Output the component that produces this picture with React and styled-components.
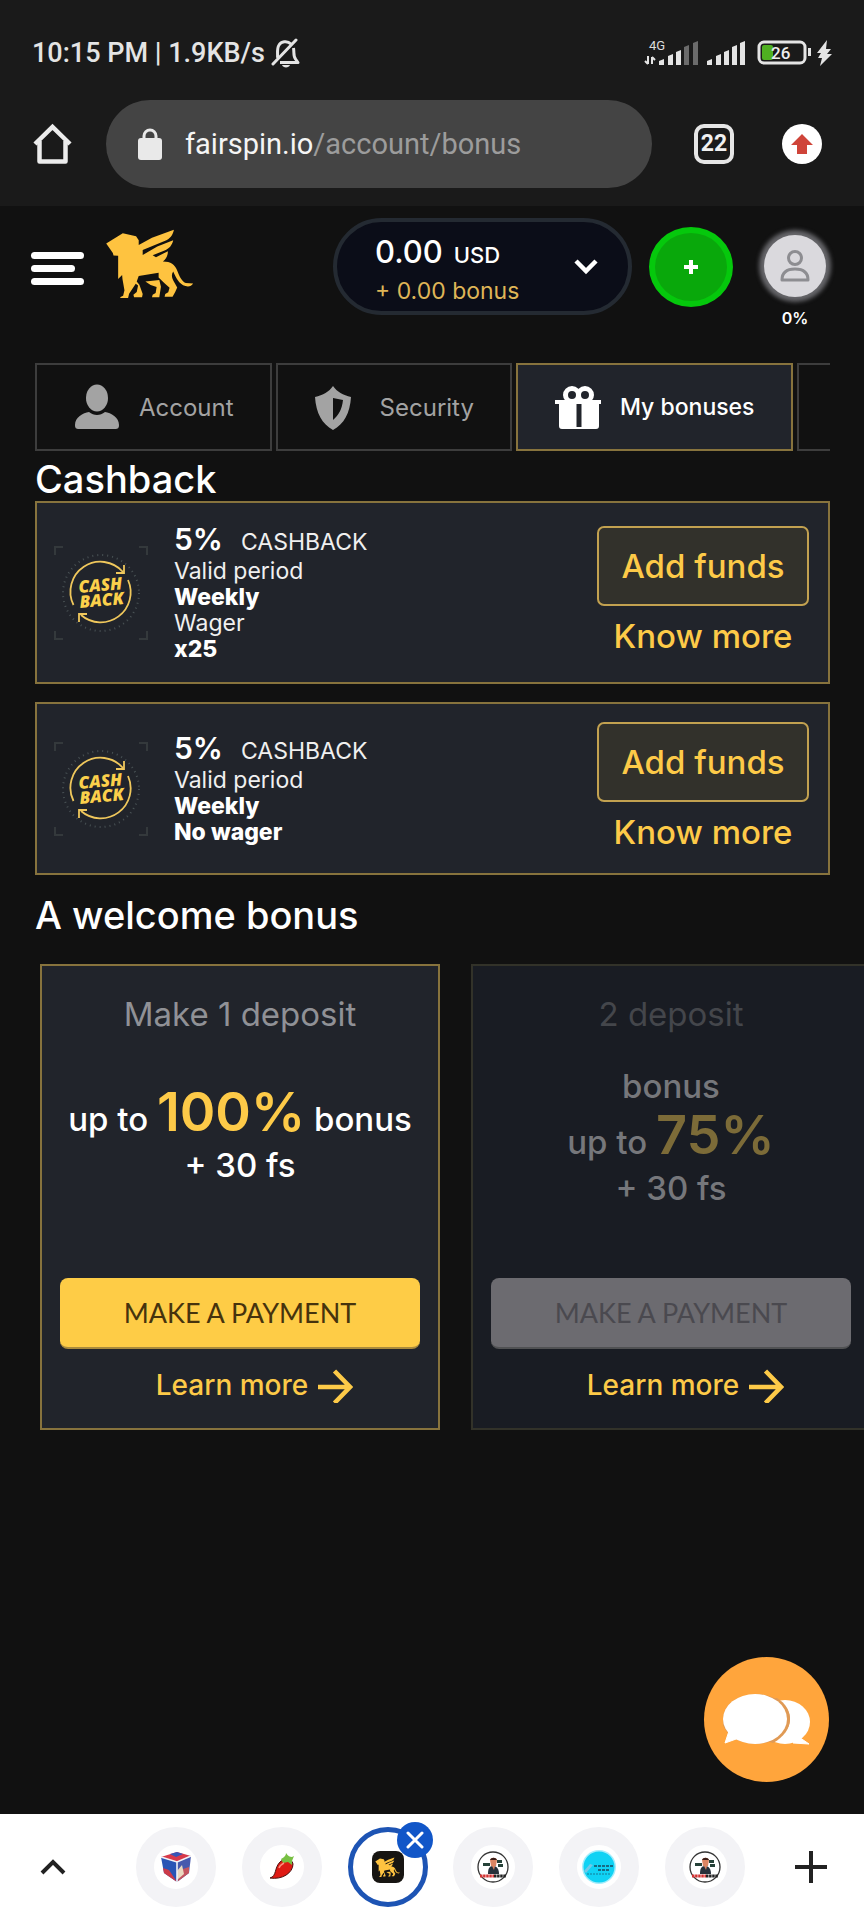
import React from "react";
import styled, { createGlobalStyle } from "styled-components";

const gold = "#fdca48";
const panel = "#21242b";

const GlobalStyle = createGlobalStyle`
  *, *::before, *::after { box-sizing: border-box; }
  body {
    margin: 0;
    background: #111111;
    color: #fff;
    font-family: Inter, "Liberation Sans", sans-serif;
  }
  button {
    font: inherit;
    color: inherit;
    background: none;
    border: 0;
    padding: 0;
    cursor: pointer;
  }
  a { color: inherit; text-decoration: none; }
  h1, h2, h3, p, dl, dd, dt { margin: 0; font-weight: inherit; font-size: inherit; }
  svg { display: block; flex: none; }
`;

const Page = styled.div`
  min-height: 100vh;
  display: flex;
  flex-direction: column;
  position: relative;
  overflow: hidden;
`;

/* ---------- device status bar and browser toolbar ---------- */

const BrowserChrome = styled.div`
  background: #1a1a1a;
  padding: 37px 32px 18px;
  font-family: Roboto, "Liberation Sans", sans-serif;
`;

const StatusBar = styled.div`
  display: flex;
  align-items: center;
  justify-content: space-between;
  height: 32px;
  margin-bottom: 31px;
  color: #e4e4e4;
`;

const Clock = styled.div`
  display: flex;
  align-items: center;
  gap: 6px;
  font-size: 27px;
  font-weight: 500;
  line-height: 32px;
`;

const Toolbar = styled.div`
  display: flex;
  align-items: center;
  height: 88px;
`;

const Address = styled.button`
  flex: 1;
  height: 88px;
  margin: 0 42px 0 33px;
  padding: 0 32px;
  border-radius: 44px;
  background: #444444;
  display: flex;
  align-items: center;
  gap: 23px;
  font-size: 29px;
  color: #9c9c9c;
  text-align: left;
  strong { font-weight: 400; color: #f5f5f5; }
`;

const TabCount = styled.button`
  width: 40px;
  height: 40px;
  border: 4px solid #e6e6e6;
  border-radius: 10px;
  font-size: 23px;
  font-weight: 700;
  color: #f0f0f0;
  line-height: 32px;
`;

const UpdateButton = styled.button`
  width: 40px;
  height: 40px;
  margin: 0 10px 0 48px;
  border-radius: 50%;
  background: #fff;
  display: grid;
  place-items: center;
`;

/* ---------- site header ---------- */

const Header = styled.header`
  display: flex;
  align-items: flex-start;
  padding: 12px 31px 0;
  height: 157px;
`;

const MenuButton = styled.button`
  display: flex;
  flex-direction: column;
  gap: 6px;
  margin-top: 34px;
  width: 53px;
`;

const MenuLine = styled.span`
  height: 7px;
  width: ${(p) => (p.$short ? "44px" : "53px")};
  border-radius: 4px;
  background: #fff;
`;

const Logo = styled.a`
  margin: 11px 0 0 21px;
`;

const Balance = styled.button`
  margin-left: auto;
  width: 299px;
  height: 97px;
  padding: 0 30px 0 38px;
  border: 4px solid #242a32;
  border-radius: 49px;
  background: #0b0d18;
  display: flex;
  align-items: center;
  justify-content: space-between;
  text-align: left;
`;

const Funds = styled.span`
  padding-top: 8px;
`;

const Amount = styled.span`
  display: flex;
  align-items: baseline;
  gap: 11px;
  font-size: 31px;
  font-weight: 500;
  line-height: 38px;
  small { font-size: 22px; }
`;

const BonusAmount = styled.span`
  display: block;
  font-size: 23px;
  line-height: 34px;
  color: #dfb557;
`;

const DepositButton = styled.button`
  width: 84px;
  height: 80px;
  margin: 9px 0 0 17px;
  border: 6px solid #05c80c;
  border-radius: 50%;
  background: #09a80b;
  display: grid;
  place-items: center;
`;

const Profile = styled.button`
  display: flex;
  flex-direction: column;
  align-items: center;
  width: 76px;
  margin: 17px 0 0 24px;
  font-size: 16px;
  font-weight: 600;
  line-height: 20px;
  gap: 11px;
`;

const Avatar = styled.span`
  width: 62px;
  height: 62px;
  border-radius: 50%;
  background: #dad9dd;
  box-shadow: 0 0 4px 5px #66666a;
  display: grid;
  place-items: center;
`;

/* ---------- account sections ---------- */

const Tabs = styled.nav`
  display: flex;
  gap: 4px;
  margin: 0 34px 0 35px;
  overflow: hidden;
`;

const Tab = styled.button`
  flex: none;
  display: flex;
  align-items: center;
  gap: 18px;
  height: 88px;
  padding: 0 36px;
  border: 2px solid ${(p) => (p.$active ? "#87733d" : "#3d3d3d")};
  background: ${(p) => (p.$active ? panel : "transparent")};
  color: ${(p) => (p.$active ? "#fff" : "#a3a3a3")};
  font-size: ${(p) => (p.$active ? "23px" : "24px")};
  font-weight: ${(p) => (p.$active ? 500 : 400)};
`;

const Main = styled.main`
  padding: 0 34px 0 35px;
`;

const SectionTitle = styled.h2`
  font-size: 38px;
  font-weight: 500;
  line-height: 44px;
  padding-top: ${(p) => (p.$spaced ? "18px" : "6px")};
`;

const CashbackList = styled.div`
  display: flex;
  flex-direction: column;
  gap: 18px;
`;

const CashbackCard = styled.article`
  display: flex;
  align-items: center;
  padding: ${(p) => (p.$tall ? "20px 19px 20px 17px" : "18px 19px 18px 17px")};
  border: 2px solid #87733d;
  background: ${panel};
`;

const Terms = styled.div`
  flex: 1;
  margin-left: 26px;
  font-size: 23px;
  line-height: 26px;
  color: #f0f0f0;
  b { display: block; font-weight: 800; color: #fff; }
  span { display: block; }
`;

const Rate = styled.h3`
  display: flex;
  align-items: baseline;
  gap: 18px;
  line-height: 32px;
  strong { font-size: 30px; font-weight: 600; color: #fff; }
`;

const Actions = styled.div`
  display: flex;
  flex-direction: column;
  align-items: center;
  width: 212px;
  gap: 8px;
  font-size: 33px;
  font-weight: 500;
  color: ${gold};
`;

const AddFunds = styled.button`
  width: 100%;
  height: 80px;
  border: 2px solid #c2a150;
  border-radius: 7px;
  background: #32312b;
`;

const KnowMore = styled.a`
  line-height: 45px;
`;

/* ---------- welcome bonus carousel ---------- */

const Carousel = styled.div`
  display: flex;
  gap: 31px;
  margin-top: 27px;
  padding: 0 5px;
  margin-right: -34px;
  overflow: hidden;
`;

const BonusCard = styled.article`
  flex: 0 0 400px;
  height: 466px;
  padding: 24px 18px 20px;
  border: 2px solid ${(p) => (p.$locked ? "#323229" : "#87733d")};
  background: ${(p) => (p.$locked ? "#191c23" : panel)};
  color: ${(p) => (p.$locked ? "#76777b" : "#fff")};
  display: flex;
  flex-direction: column;
  align-items: center;
`;

const BonusTitle = styled.h3`
  font-size: 33px;
  line-height: 48px;
  color: ${(p) => (p.$locked ? "#44464b" : "#909196")};
`;

const Offer = styled.p`
  flex: 1;
  display: flex;
  flex-direction: column;
  justify-content: center;
  text-align: center;
  font-size: 33px;
  font-weight: 500;
  line-height: 46px;
  white-space: nowrap;
  padding-bottom: 42px;
  strong {
    font-size: 54px;
    font-weight: 600;
    line-height: 52px;
    color: ${(p) => (p.$locked ? "#7c6b38" : gold)};
  }
`;

const PayButton = styled.button`
  width: 100%;
  height: 71px;
  border-radius: 8px;
  border-bottom: 2px solid ${(p) => (p.$locked ? "#505153" : "#a98a3c")};
  background: ${(p) => (p.$locked ? "#6c6b70" : "#fecc46")};
  color: ${(p) => (p.$locked ? "#4a494f" : "#46330d")};
  font-family: Lato, "Liberation Sans", sans-serif;
  font-size: 27px;
`;

const LearnMore = styled.a`
  display: flex;
  align-items: center;
  gap: 10px;
  margin-top: 13px;
  padding-left: 29px;
  height: 46px;
  font-size: 28px;
  font-weight: 500;
  color: ${gold};
`;

/* ---------- floating chat and browser tab strip ---------- */

const ChatButton = styled.button`
  position: absolute;
  right: 35px;
  bottom: 138px;
  width: 125px;
  height: 125px;
  border-radius: 50%;
  background: #ffa53c;
  display: grid;
  place-items: center;
`;

const TabStrip = styled.footer`
  margin-top: auto;
  height: 106px;
  padding: 0 33px;
  background: #fff;
  display: flex;
  align-items: center;
  justify-content: space-between;
`;

const StripButton = styled.button`
  width: 40px;
  height: 40px;
  display: grid;
  place-items: center;
`;

const OpenTabs = styled.div`
  display: flex;
  justify-content: space-between;
  flex: 1;
  margin: 0 46px 0 63px;
`;

const SiteTab = styled.button`
  position: relative;
  width: 80px;
  height: 80px;
  border-radius: 50%;
  border: ${(p) => (p.$current ? "5px solid #1d54b4" : "18px solid #f3f3f6")};
  background: #fff;
  display: grid;
  place-items: center;
`;

const CloseBadge = styled.span`
  position: absolute;
  top: -10px;
  right: -10px;
  width: 36px;
  height: 36px;
  border-radius: 50%;
  background: #1156c8;
  display: grid;
  place-items: center;
`;

/* ---------- drawings ---------- */

const BellOff = () => (
  <svg width="30" height="32" viewBox="0 0 30 32" fill="none" stroke="currentColor" strokeWidth="3">
    <path d="M2 27 25 3" strokeLinecap="round" />
    <path d="M6.500 21C7 17 5.500 12 8 8c2-3.400 8-5 12-1" />
    <path d="M22.500 11c.8 4-.4 8 2 11l2.500 3.500H9" strokeLinejoin="round" />
    <path d="M11 28h8c-1 3.200-7 3.200-8 0z" fill="currentColor" stroke="none" />
  </svg>
);

const SystemIcons = () => (
  <svg width="190" height="30" viewBox="0 0 190 30">
    <text x="7" y="12" fontSize="13" fontFamily="Roboto, sans-serif" fill="#dcdcdc">4G</text>
    <path d="M6 18v8M3 23l3 3M10 26v-7M10 19l3 3" stroke="#e4e4e4" strokeWidth="2" fill="none" />
    <path d="M17 27v-4l5-2v6zM26 27V18l5-2v11zM34 27V14l5-2v15z" fill="#e4e4e4" />
    <path d="M42 27V9l5-2v20zM51 27V5l5-2v24z" fill="#6b6b6b" />
    <path d="M65 27v-4l5-2v6zM74 27V18l5-2v11zM82 27V14l5-2v15zM90 27V9l5-2v20zM98 27V5l5-2v24z" fill="#e4e4e4" />
    <rect x="117" y="4" width="46" height="21" rx="5" fill="none" stroke="#e4e4e4" strokeWidth="3" />
    <rect x="120" y="7" width="11" height="15" rx="2" fill="#4fb021" />
    <text x="129" y="20.500" fontSize="17" fontWeight="500" fontFamily="Roboto, sans-serif" fill="#eee">26</text>
    <rect x="166" y="10" width="3" height="8" fill="#e4e4e4" />
    <path d="M185 2 175 15h4l-3 5h4l-2 8 12-12h-5l4-5h-5z" fill="#e4e4e4" />
  </svg>
);

const HomeIcon = () => (
  <svg width="41" height="42" viewBox="0 0 41 42" fill="none" stroke="#ececec" strokeWidth="4.500" strokeLinejoin="round">
    <path d="M3 21 20.500 4 38 21" strokeLinejoin="miter" />
    <path d="M7.500 18v20.500h26V18" />
  </svg>
);

const LockIcon = () => (
  <svg width="24" height="32" viewBox="0 0 24 32">
    <path d="M6 12V8a6 6 0 0 1 12 0v4" fill="none" stroke="#e9e9e9" strokeWidth="3" />
    <rect y="10" width="24" height="22" rx="3" fill="#e9e9e9" />
  </svg>
);

const Lion = ({ width, height }) => (
  <svg width={width} height={height} viewBox="315 86 267 208" fill="#fec340">
    <path d="M318 130 368 99l40 9 8 12v14l40-22 66-24c-3 17-12 28-28 34l-66 27 0 15 44-25 48-19c-4 16-12 25-26 31l-36 14 10 6 36-18c0 14-6 24-15 31 24 0 36 10 42 25 8 22 17 37 27 40l22 1c-5 8-13 11-23 8-20-6-29-26-37-44-7 10-4 22 4 34l8 14-6 14-8 14h-24l2-8 9-5 4-14-16-14-17-17v-14l-60 10-6 16 8 10 10 28-2 10h-24l-2-8 10-8 4-20-7-5-20 30-4 17-24 1 2-8 8-4 4-16-6-34-1-12-12 12 0-70-14-1-2-8z" />
    <path d="M436 244l42-4 5 20-5 32h-22l2-8 9-5 3-18-18-6z" />
  </svg>
);

const PersonIcon = () => (
  <svg width="48" height="48" viewBox="0 0 48 48" fill="currentColor">
    <ellipse cx="24" cy="15" rx="11" ry="13.500" />
    <path d="M2 42c0-8 8-12 14-13 5 4 11 4 16 0 6 1 14 5 14 13 0 3-1 4-4 4H6c-3 0-4-1-4-4z" />
  </svg>
);

const ShieldIcon = () => (
  <svg width="48" height="48" viewBox="0 0 48 48" fill="currentColor" fillRule="evenodd">
    <path d="M19 3c4 6 10 9 18 11-1 16-7 27-18 33C8 41 2 30 1 14c8-2 14-5 18-11zm0 12v22c6-5 9-11 10-20z" />
  </svg>
);

const GiftIcon = () => (
  <svg width="48" height="48" viewBox="0 0 48 48">
    <g fill="none" stroke="#fff" strokeWidth="5">
      <circle cx="18" cy="12" r="6.500" />
      <circle cx="31" cy="12" r="6.500" />
    </g>
    <path d="M1 17h46v4h-2v22c0 2-1 3-3 3H8c-2 0-3-1-3-3V21H1z" fill="#fff" />
    <path d="M22.500 21h5v23h-5z" fill={panel} />
  </svg>
);

const CashbackBadge = () => (
  <svg width="94" height="94" viewBox="0 0 94 94" fill="none">
    <path d="M1 9V1h8M85 1h8v8M93 85v8h-8M9 93H1v-8" stroke="#34393c" strokeWidth="2" />
    <circle cx="47" cy="47" r="38" stroke="#485154" strokeWidth="2" strokeDasharray="1 4" />
    <path d="M19.500 59A30 30 0 0 1 69 26M74 34A30 30 0 0 1 27 69" stroke="#efc75c" strokeWidth="1.800" />
    <path d="M70 19v8h-8M25 76v-8h8" stroke="#efc75c" strokeWidth="1.800" />
    <g fill="#fbd04b" fontFamily="Open Sans, sans-serif" fontWeight="800" fontStyle="italic" fontSize="17" textAnchor="middle" transform="rotate(-5 47 47)">
      <text x="47" y="45">CASH</text>
      <text x="47" y="60">BACK</text>
    </g>
  </svg>
);

const ArrowRight = () => (
  <svg width="35" height="36" viewBox="0 0 35 36" fill="none" stroke="currentColor" strokeWidth="4.500">
    <path d="M0 20h32M16.500 4 32 20 16.500 36" />
  </svg>
);

const CubeIcon = () => (
  <svg width="32" height="32" viewBox="0 0 32 32">
    <path d="M1 6 17 1l14 4-14 6z" fill="#d8394a" />
    <path d="m10 3 7-2 6 2-7 3z" fill="#3656b8" />
    <path d="M1 6l16 5v20L4 22z" fill="#2a55b5" />
    <path d="m3 17 6 2 8 12-13-9z" fill="#cc3a48" />
    <path d="M31 5 17 11v20l12-9z" fill="#4659ad" />
    <path d="m29 16-6 2-6 13 12-9z" fill="#c3545e" />
    <path d="m17 20 5-6 2 9-7 6z" fill="#ead9c0" />
    <path d="M1 6l16 5 14-6M17 11v20" fill="none" stroke="#f2f2f6" strokeWidth="1.600" />
  </svg>
);

const ChiliIcon = () => (
  <svg width="32" height="32" viewBox="0 0 32 32">
    <path d="M14 11c4-4 12-4 13 2 0 9-11 16-23 14 7-2 4-10 10-16z" fill="#df1a14" stroke="#4b1210" strokeWidth="1" />
    <path d="M15 8c4-2 5-4 5-6 2 3 4 4 6 4l2-1-2 5 0 4-4-3-5 1z" fill="#78c043" />
    <path d="M13 17c1-3 3-4 5-5" stroke="#ff8d7d" strokeWidth="1.500" fill="none" />
  </svg>
);

const AppTile = styled.span`
  width: 32px;
  height: 32px;
  border-radius: 8px;
  background: #171512;
  display: grid;
  place-items: center;
`;

const StreamerIcon = () => (
  <svg width="32" height="32" viewBox="0 0 32 32">
    <circle cx="16" cy="16" r="15" fill="#fff" stroke="#333" strokeWidth="1.300" />
    <path d="M6 12h7v3H6zM20 9h5v3h-5zM21 13h5v3h-5z" fill="#264239" />
    <path d="M13 9c1-3 6-3 7 0l-1 6h-5z" fill="#dc8563" />
    <path d="M13 9c1-3 6-3 7 0z" fill="#3b1d17" />
    <path d="M11 23c0-5 1-8 5-8s6 3 6 8z" fill="#27313b" />
    <path d="m15 15 2 4 1-4z" fill="#dc8563" />
    <path d="M3 25h14" stroke="#d33131" strokeWidth="3" strokeDasharray="2.500 .6" />
    <path d="M17 25h12" stroke="#222" strokeWidth="3" strokeDasharray="2.500 .6" />
  </svg>
);

const CyanIcon = () => (
  <svg width="36" height="36" viewBox="0 0 36 36">
    <circle cx="18" cy="18" r="17" fill="#a5edfb" />
    <circle cx="18" cy="18" r="15.500" fill="#10d2f4" />
    <path d="m3 22 6-7 3 1-7 8z" fill="#72c9e8" />
    <path d="M13 17h20" stroke="#176b84" strokeWidth="2.200" strokeDasharray="3 1" />
    <path d="M17 21h11" stroke="#176b84" strokeWidth="2.200" strokeDasharray="3 1" />
    <path d="M6 25h24" stroke="#147d98" strokeWidth="1" strokeDasharray="2 1" />
  </svg>
);

const ChatIcon = () => (
  <svg width="88" height="54" viewBox="0 0 88 54">
    <ellipse cx="62" cy="29" rx="25" ry="22" fill="#fff" />
    <path d="m76 44 10 7-16-1z" fill="#fff" stroke="#fff" />
    <path d="M54 5C72 16 72 38 50 50l-6-2V6z" fill="#e09a55" />
    <ellipse cx="33" cy="26" rx="34" ry="25" fill="#e09a55" />
    <path d="M0 26a33 26 0 0 1 33-26v4H0z" fill="#ffa53c" />
    <ellipse cx="32" cy="26" rx="32" ry="25" fill="#fff" />
    <path d="M6 38 2 50l14-5z" fill="#fff" stroke="#fff" />
  </svg>
);

/* ---------- page parts ---------- */

const cashbacks = [
  { id: "wager", tall: true, wager: "x25" },
  { id: "no-wager", tall: false, wager: null },
];

const siteTabs = [
  { name: "Cube", icon: <CubeIcon /> },
  { name: "Chili", icon: <ChiliIcon /> },
  { name: "Fairspin", current: true, icon: <AppTile><Lion width={25} height={20} /></AppTile> },
  { name: "Streamer", icon: <StreamerIcon /> },
  { name: "Blue site", icon: <CyanIcon /> },
  { name: "Streamer 2", icon: <StreamerIcon /> },
];

const CashbackItem = ({ tall, wager }) => (
  <CashbackCard $tall={tall}>
    <CashbackBadge />
    <Terms>
      <Rate><strong>5%</strong> CASHBACK</Rate>
      <span>Valid period</span>
      <b>Weekly</b>
      {wager ? (
        <>
          <span>Wager</span>
          <b>{wager}</b>
        </>
      ) : (
        <b>No wager</b>
      )}
    </Terms>
    <Actions>
      <AddFunds>Add funds</AddFunds>
      <KnowMore href="#terms">Know more</KnowMore>
    </Actions>
  </CashbackCard>
);

const BonusItem = ({ title, locked, children }) => (
  <BonusCard $locked={locked}>
    <BonusTitle $locked={locked}>{title}</BonusTitle>
    <Offer $locked={locked}>{children}</Offer>
    <PayButton $locked={locked} disabled={locked}>MAKE A PAYMENT</PayButton>
    <LearnMore href="#learn">Learn more <ArrowRight /></LearnMore>
  </BonusCard>
);

export default function App() {
  return (
    <Page>
      <GlobalStyle />
      <BrowserChrome>
        <StatusBar>
          <Clock>10:15 PM | 1.9KB/s <BellOff /></Clock>
          <SystemIcons />
        </StatusBar>
        <Toolbar>
          <button aria-label="Home"><HomeIcon /></button>
          <Address>
            <LockIcon />
            <span><strong>fairspin.io</strong>/account/bonus</span>
          </Address>
          <TabCount>22</TabCount>
          <UpdateButton aria-label="Update">
            <svg width="22" height="20" viewBox="0 0 22 20"><path d="M11 0 22 11h-6v9H6v-9H0z" fill="#cf4439" /></svg>
          </UpdateButton>
        </Toolbar>
      </BrowserChrome>

      <Header>
        <MenuButton aria-label="Menu">
          <MenuLine />
          <MenuLine $short />
          <MenuLine />
        </MenuButton>
        <Logo href="#home" aria-label="Fairspin"><Lion width={89} height={69} /></Logo>
        <Balance>
          <Funds>
            <Amount>0.00 <small>USD</small></Amount>
            <BonusAmount>+ 0.00 bonus</BonusAmount>
          </Funds>
          <svg width="24" height="16" viewBox="0 0 24 16" fill="none" stroke="#fff" strokeWidth="4.500"><path d="m2 2 10 10L22 2" /></svg>
        </Balance>
        <DepositButton aria-label="Deposit">
          <svg width="14" height="14" viewBox="0 0 14 14" stroke="#fff" strokeWidth="4"><path d="M7 0v14M0 7h14" /></svg>
        </DepositButton>
        <Profile>
          <Avatar>
            <svg width="30" height="32" viewBox="0 0 30 32" fill="none" stroke="#8d8d91" strokeWidth="3">
              <circle cx="15" cy="8" r="6.500" />
              <path d="M2 30c0-7 4-11 13-11s13 4 13 11z" strokeLinejoin="round" />
            </svg>
          </Avatar>
          0%
        </Profile>
      </Header>

      <Tabs>
        <Tab><PersonIcon />Account</Tab>
        <Tab><ShieldIcon />Security</Tab>
        <Tab $active aria-current="page"><GiftIcon />My bonuses</Tab>
        <Tab aria-label="More" />
      </Tabs>

      <Main>
        <SectionTitle>Cashback</SectionTitle>
        <CashbackList>
          {cashbacks.map((c) => <CashbackItem key={c.id} {...c} />)}
        </CashbackList>

        <SectionTitle $spaced>A welcome bonus</SectionTitle>
        <Carousel>
          <BonusItem title="Make 1 deposit">
            <span>up to <strong>100%</strong> bonus</span>
            <span>+ 30 fs</span>
          </BonusItem>
          <BonusItem title="2 deposit" locked>
            <span>bonus</span>
            <span>up to <strong>75%</strong></span>
            <span>+ 30 fs</span>
          </BonusItem>
        </Carousel>
      </Main>

      <ChatButton aria-label="Chat"><ChatIcon /></ChatButton>

      <TabStrip>
        <StripButton aria-label="Expand">
          <svg width="26" height="16" viewBox="0 0 26 16" fill="none" stroke="#222" strokeWidth="4"><path d="M2 14 13 3l11 11" /></svg>
        </StripButton>
        <OpenTabs>
          {siteTabs.map((t) => (
            <SiteTab key={t.name} $current={t.current} aria-label={t.name}>
              {t.icon}
              {t.current && (
                <CloseBadge>
                  <svg width="18" height="18" viewBox="0 0 18 18" stroke="#fff" strokeWidth="3" strokeLinecap="round"><path d="m2 2 14 14M16 2 2 16" /></svg>
                </CloseBadge>
              )}
            </SiteTab>
          ))}
        </OpenTabs>
        <StripButton aria-label="New tab">
          <svg width="32" height="32" viewBox="0 0 32 32" stroke="#222" strokeWidth="4"><path d="M16 0v32M0 16h32" /></svg>
        </StripButton>
      </TabStrip>
    </Page>
  );
}
